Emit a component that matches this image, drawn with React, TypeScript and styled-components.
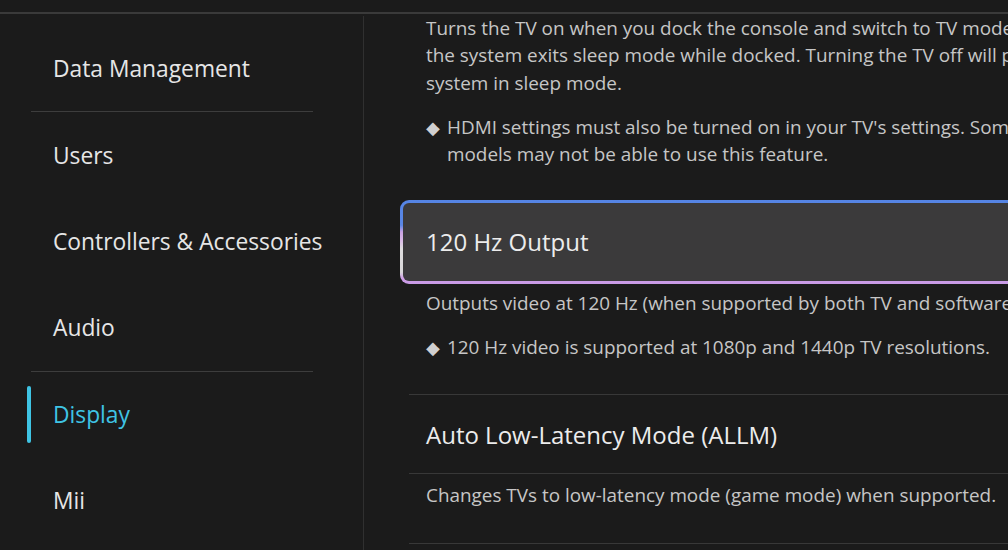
import React from 'react';
import styled, { createGlobalStyle, css } from 'styled-components';

const GlobalStyle = createGlobalStyle`
  html, body {
    margin: 0;
    padding: 0;
    background: #1b1b1b;
    overflow: hidden;
  }
  body {
    font-family: 'Open Sans', 'Noto Sans', sans-serif;
    -webkit-font-smoothing: antialiased;
  }
`;

const Screen = styled.div`
  width: 1008px;
  height: 550px;
  display: flex;
  flex-direction: column;
  background: #1b1b1b;
  overflow: hidden;
`;

const TopBar = styled.div`
  height: 12px;
  flex: none;
  border-bottom: 2px solid #3a3a3a;
`;

const Body = styled.div`
  flex: 1;
  display: flex;
  min-height: 0;
`;

const Sidebar = styled.nav`
  width: 364px;
  flex: none;
  margin-top: 2px;
  padding-top: 10px;
  border-right: 1px solid #303030;
  box-sizing: border-box;
`;

const NavItem = styled.div<{ $active?: boolean; $divider?: boolean }>`
  position: relative;
  height: 86.4px;
  margin-left: 31px;
  width: 282px;
  box-sizing: border-box;
  padding-left: 22px;
  display: flex;
  align-items: center;
  font-size: 22.8px;
  color: #e6e6e6;
  white-space: nowrap;
  border-bottom: 1px solid ${(p) => (p.$divider ? '#3d3d3d' : 'transparent')};

  ${(p) =>
    p.$active &&
    css`
      color: #3fc4e4;
      &::before {
        content: '';
        position: absolute;
        left: -4px;
        top: 14px;
        bottom: 14px;
        width: 4px;
        border-radius: 2px;
        background: #3fc4e4;
      }
    `}
`;

const Content = styled.main`
  flex: 1;
  padding-left: 45px;
  min-width: 0;
`;

const Desc = styled.div<{ $first?: boolean }>`
  padding: ${(p) => (p.$first ? '0' : '8px')} 0 33px 17px;
  margin-top: ${(p) => (p.$first ? '0.5px' : '0')};
  color: #c6c6c6;
  font-size: 18.9px;
  line-height: 27.5px;
  white-space: nowrap;
`;

const Para = styled.p`
  margin: 0;
`;

const Note = styled.div`
  display: flex;
  margin-top: 16.5px;
`;

const Diamond = styled.span`
  width: 21px;
  flex: none;
  font-size: 18px;
  color: #d0d0d0;
`;

const Line = styled.span`
  display: block;
`;

const Row = styled.div<{ $selected?: boolean }>`
  position: relative;
  height: 80px;
  box-sizing: border-box;
  padding-left: 17px;
  display: flex;
  align-items: center;
  border-top: 1px solid #383838;
  border-bottom: 1px solid #383838;
  font-size: 24px;
  color: #ececec;
  white-space: nowrap;
  width: 900px;

  ${(p) =>
    p.$selected &&
    css`
      border-color: transparent;
      &::before {
        content: '';
        position: absolute;
        top: -3px;
        bottom: -3px;
        left: -9px;
        right: -20px;
        border-radius: 9px;
        border: 3px solid transparent;
        background:
          linear-gradient(#3b3a3b, #3b3a3b) padding-box,
          linear-gradient(
              to bottom,
              #5584e4 0%,
              #5a87e6 30%,
              #c9a2e2 38%,
              #d9b8e6 48%,
              #dedcde 58%,
              #d8d6d8 86%,
              #cf9fe6 93%,
              #c79ae6 100%
            )
            border-box;
      }
    `}
`;

const RowLabel = styled.span`
  position: relative;
`;

const navItems = [
  { label: 'Data Management', divider: true },
  { label: 'Users' },
  { label: 'Controllers & Accessories' },
  { label: 'Audio', divider: true },
  { label: 'Display', active: true },
  { label: 'Mii' },
];

export default function App() {
  return (
    <>
      <GlobalStyle />
      <Screen>
        <TopBar />
        <Body>
          <Sidebar>
            {navItems.map((item) => (
              <NavItem key={item.label} $active={item.active} $divider={item.divider}>
                {item.label}
              </NavItem>
            ))}
          </Sidebar>
          <Content>
            <Desc $first>
              <Para>
                <Line>Turns the TV on when you dock the console and switch to TV mode when</Line>
                <Line>the system exits sleep mode while docked. Turning the TV off will put the</Line>
                <Line>system in sleep mode.</Line>
              </Para>
              <Note>
                <Diamond>◆</Diamond>
                <div>
                  <Line>HDMI settings must also be turned on in your TV's settings. Some TV</Line>
                  <Line>models may not be able to use this feature.</Line>
                </div>
              </Note>
            </Desc>

            <Row $selected>
              <RowLabel>120 Hz Output</RowLabel>
            </Row>
            <Desc>
              <Para>Outputs video at 120 Hz (when supported by both TV and software).</Para>
              <Note>
                <Diamond>◆</Diamond>
                <Line>120 Hz video is supported at 1080p and 1440p TV resolutions.</Line>
              </Note>
            </Desc>

            <Row>
              <RowLabel>Auto Low-Latency Mode (ALLM)</RowLabel>
            </Row>
            <Desc>
              <Para>Changes TVs to low-latency mode (game mode) when supported.</Para>
            </Desc>

            <Row>
              <RowLabel>Matching Frame Rate</RowLabel>
            </Row>
          </Content>
        </Body>
      </Screen>
    </>
  );
}
